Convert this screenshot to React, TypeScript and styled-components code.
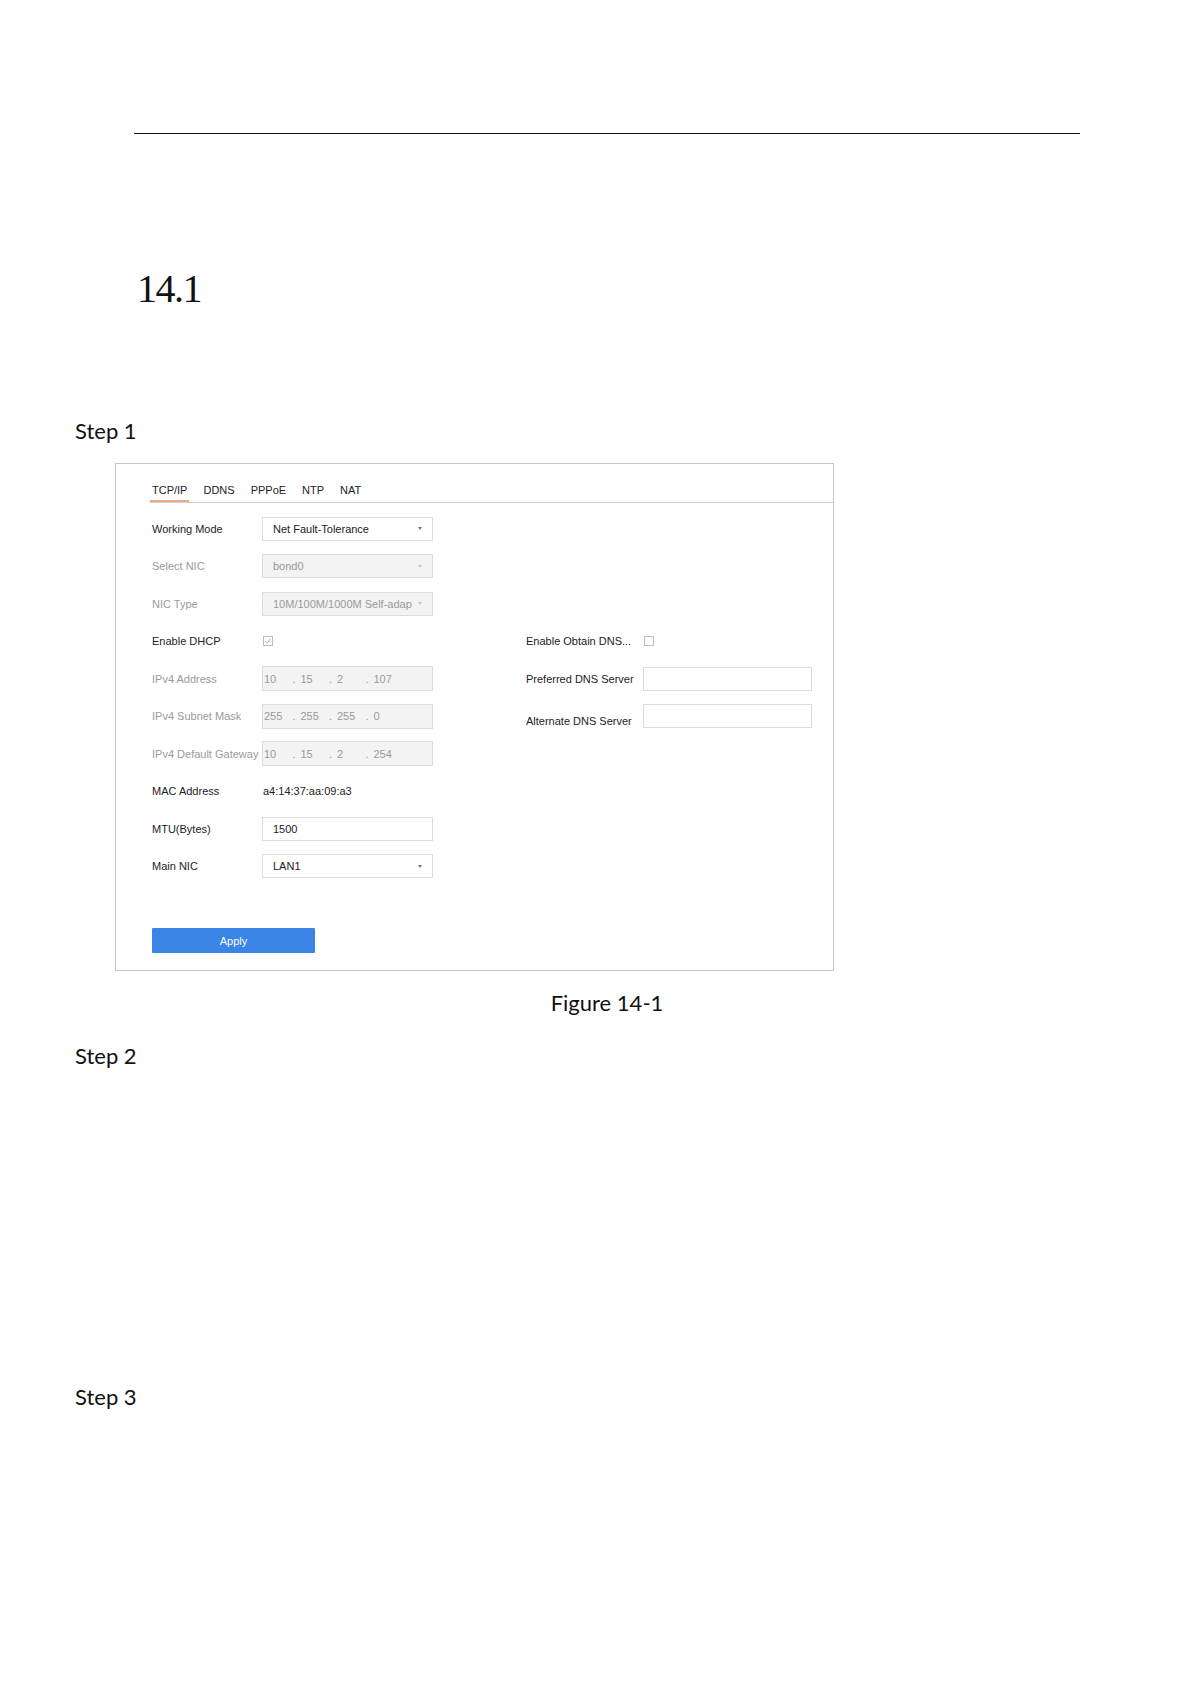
import React from "react";
import styled, { createGlobalStyle } from "styled-components";

type FieldKind = "select" | "text" | "ip" | "check" | "value";

type Field = {
  label: string;
  kind: FieldKind;
  value?: string;
  disabled?: boolean;
  checked?: boolean;
  drop?: boolean;
};

const leftFields: Field[] = [
  { label: "Working Mode", kind: "select", value: "Net Fault-Tolerance" },
  { label: "Select NIC", kind: "select", value: "bond0", disabled: true },
  { label: "NIC Type", kind: "select", value: "10M/100M/1000M Self-adap", disabled: true },
  { label: "Enable DHCP", kind: "check", checked: true },
  { label: "IPv4 Address", kind: "ip", value: "10.15.2.107", disabled: true },
  { label: "IPv4 Subnet Mask", kind: "ip", value: "255.255.255.0", disabled: true },
  { label: "IPv4 Default Gateway", kind: "ip", value: "10.15.2.254", disabled: true },
  { label: "MAC Address", kind: "value", value: "a4:14:37:aa:09:a3" },
  { label: "MTU(Bytes)", kind: "text", value: "1500" },
  { label: "Main NIC", kind: "select", value: "LAN1" },
];

const rightFields: Field[] = [
  { label: "Enable Obtain DNS...", kind: "check", checked: false },
  { label: "Preferred DNS Server", kind: "text", value: "" },
  { label: "Alternate DNS Server", kind: "text", value: "", drop: true },
];

const tabs = ["TCP/IP", "DDNS", "PPPoE", "NTP", "NAT"];

const ROW = 37.5;

export default function App() {
  const renderControl = (f: Field) => {
    switch (f.kind) {
      case "select":
        return (
          <SelectBox $disabled={f.disabled}>
            <span>{f.value}</span>
            <Caret $disabled={f.disabled} />
          </SelectBox>
        );
      case "text":
        return <TextBox $wide={!f.value}>{f.value}</TextBox>;
      case "ip":
        return (
          <IpBox>
            {(f.value || "").split(".").map((o, i, arr) => (
              <Octet key={i}>
                <span>{o}</span>
                {i < arr.length - 1 && <Dot>.</Dot>}
              </Octet>
            ))}
          </IpBox>
        );
      case "check":
        return (
          <Checkbox>
            {f.checked && (
              <svg width="8" height="8" viewBox="0 0 8 8">
                <path d="M1.2 4.2 L3.2 6 L6.8 1.8" fill="none" stroke="#7aa7e0" strokeWidth="0.9" />
              </svg>
            )}
          </Checkbox>
        );
      default:
        return <MacValue>{f.value}</MacValue>;
    }
  };

  return (
    <>
      <GlobalStyle />
      <Page>
        <HeaderRule />
        <SectionNumber>14.1</SectionNumber>
        <StepLabel $gap={110}>Step 1</StepLabel>

        <Figure>
          <TabBar>
            {tabs.map((t, i) => (
              <Tab key={t} $active={i === 0}>
                {t}
              </Tab>
            ))}
          </TabBar>

          <FormBody>
            <Column $labelWidth={110}>
              {leftFields.map((f) => (
                <FieldRow key={f.label}>
                  <FieldLabel $muted={f.disabled}>{f.label}</FieldLabel>
                  {renderControl(f)}
                </FieldRow>
              ))}
            </Column>
            <Column $labelWidth={117} $offsetRows={3}>
              {rightFields.map((f) => (
                <FieldRow key={f.label}>
                  <FieldLabel $drop={f.drop}>{f.label}</FieldLabel>
                  {renderControl(f)}
                </FieldRow>
              ))}
            </Column>
          </FormBody>

          <ApplyButton>Apply</ApplyButton>
        </Figure>

        <Caption>Figure 14-1</Caption>
        <StepLabel $gap={29.5}>Step 2</StepLabel>
        <StepLabel $gap={316.5}>Step 3</StepLabel>
      </Page>
    </>
  );
}

const GlobalStyle = createGlobalStyle`
  body {
    margin: 0;
    background: #ffffff;
  }
`;

const Page = styled.div`
  width: 1191px;
  min-height: 1684px;
  background: #ffffff;
  display: flex;
  flex-direction: column;
  align-items: flex-start;
`;

const HeaderRule = styled.div`
  margin: 133px 0 0 134px;
  width: 946px;
  border-top: 1px solid #111;
`;

const SectionNumber = styled.h2`
  margin: 134.5px 0 0 137px;
  font-family: "Liberation Serif", serif;
  font-weight: normal;
  font-size: 40px;
  line-height: 40px;
  color: #111;
  letter-spacing: -1.5px;
`;

const StepLabel = styled.div<{ $gap: number }>`
  margin: ${(p) => p.$gap}px 0 0 75px;
  font-family: Lato, "Liberation Sans", sans-serif;
  font-size: 22px;
  line-height: 24px;
  color: #111;
`;

const Caption = styled.div`
  margin: 19.5px 0 0 134px;
  width: 946px;
  text-align: center;
  font-family: Lato, "Liberation Sans", sans-serif;
  font-size: 22px;
  line-height: 24px;
  color: #111;
`;

const Figure = styled.div`
  margin: 20.5px 0 0 115px;
  width: 719px;
  height: 508px;
  box-sizing: border-box;
  border: 1px solid #c6c6c6;
  background: #fff;
  display: flex;
  flex-direction: column;
  font-family: "Liberation Sans", Arial, sans-serif;
  font-size: 11px;
  color: #222;
`;

const TabBar = styled.div`
  margin-left: 34px;
  height: 38px;
  border-bottom: 1px solid #cfcfcf;
  display: flex;
  align-items: flex-end;
  gap: 12px;
`;

const Tab = styled.div<{ $active?: boolean }>`
  padding: 0 2px 5px;
  line-height: 14px;
  color: #222;
  box-shadow: ${(p) => (p.$active ? "inset 0 -2px 0 #eeaa88" : "none")};
`;

const FormBody = styled.div`
  margin: 6.75px 0 0 36px;
  display: flex;
  gap: 93px;
`;

const Column = styled.div<{ $labelWidth: number; $offsetRows?: number }>`
  display: grid;
  grid-template-columns: ${(p) => p.$labelWidth}px auto;
  grid-auto-rows: ${ROW}px;
  padding-top: ${(p) => (p.$offsetRows || 0) * ROW}px;
  align-content: start;
`;

const FieldRow = styled.div`
  display: contents;

  & > * {
    align-self: center;
  }
`;

const FieldLabel = styled.div<{ $muted?: boolean; $drop?: boolean }>`
  white-space: nowrap;
  line-height: 14px;
  color: ${(p) => (p.$muted ? "#9a9a9a" : "#222")};
  padding-top: ${(p) => (p.$drop ? "10px" : "0")};
`;

const SelectBox = styled.div<{ $disabled?: boolean }>`
  width: 171px;
  height: 24px;
  box-sizing: border-box;
  border: 1px solid #dcdcdc;
  background: ${(p) => (p.$disabled ? "#f3f3f3" : "#fff")};
  color: ${(p) => (p.$disabled ? "#9a9a9a" : "#222")};
  padding: 0 10px;
  display: flex;
  align-items: center;
  justify-content: space-between;

  span {
    white-space: nowrap;
  }
`;

const Caret = styled.i<{ $disabled?: boolean }>`
  width: 0;
  height: 0;
  flex-shrink: 0;
  border-left: 2.5px solid transparent;
  border-right: 2.5px solid transparent;
  border-top: 3px solid ${(p) => (p.$disabled ? "#c4c4c4" : "#777")};
`;

const TextBox = styled.div<{ $wide?: boolean }>`
  width: ${(p) => (p.$wide ? "169px" : "171px")};
  height: 24px;
  box-sizing: border-box;
  border: 1px solid #dcdcdc;
  background: #fff;
  padding: 0 10px;
  line-height: 22px;
  color: #222;
`;

const IpBox = styled.div`
  width: 171px;
  height: 25px;
  box-sizing: border-box;
  border: 1px solid #dcdcdc;
  background: #f3f3f3;
  color: #9a9a9a;
  padding-left: 1px;
  display: flex;
  align-items: center;
`;

const Octet = styled.div`
  width: 36.5px;
  display: flex;

  span {
    width: 28.5px;
  }
`;

const Dot = styled.b`
  font-weight: normal;
  width: 8px;
`;

const Checkbox = styled.div`
  width: 10px;
  height: 10px;
  box-sizing: border-box;
  margin-left: 1px;
  border: 1px solid #bdbdbd;
  background: #fff;
  display: flex;
  align-items: center;
  justify-content: center;
`;

const MacValue = styled.div`
  margin-left: 1px;
  line-height: 14px;
  color: #222;
`;

const ApplyButton = styled.button`
  margin: 43.25px 0 0 36px;
  width: 163px;
  height: 25px;
  border: none;
  border-radius: 1px;
  background: #3a84e6;
  color: #fff;
  font-family: "Liberation Sans", Arial, sans-serif;
  font-size: 11px;
  padding: 0;
`;
